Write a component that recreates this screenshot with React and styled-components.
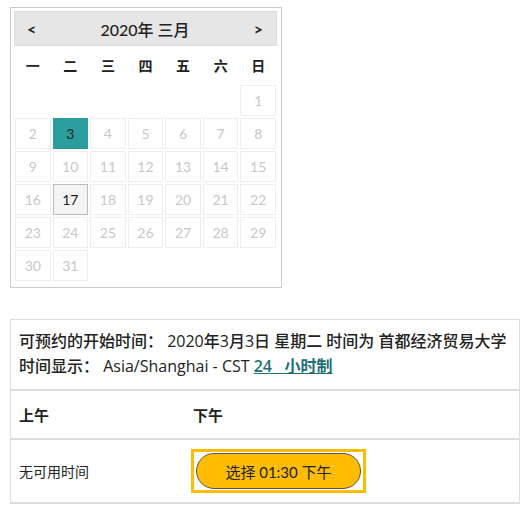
import React from 'react';
import styled, { createGlobalStyle } from 'styled-components';

const GlobalStyle = createGlobalStyle`
  body {
    margin: 0;
    background: #fff;
    font-family: Lato, "Noto Sans CJK SC", sans-serif;
    color: #333;
  }
`;

const Page = styled.div`
  padding: 7px 7px 0 10px;
`;

const Calendar = styled.div`
  width: 272px;
  box-sizing: border-box;
  border: 1px solid #ccc;
  padding: 3px 4px 6px 3px;
`;

const MonthBar = styled.div`
  height: 35px;
  box-sizing: border-box;
  background: #e6e6e6;
  border: 1px solid #ddd;
  display: flex;
  align-items: center;
  justify-content: space-between;
  padding: 0 13px 0 12px;
  font-size: 16px;
  font-weight: 500;
  color: #222;
`;

const Arrow = styled.span`
  font-size: 16px;
  font-weight: 700;
  cursor: pointer;
`;

const WeekRow = styled.div`
  display: grid;
  grid-template-columns: repeat(7, 1fr);
  gap: 2px;
  height: 37px;
  align-items: center;
  margin: 0 1px;
`;

const WeekDay = styled.span`
  text-align: center;
  font-size: 14px;
  font-weight: 700;
  color: #222;
`;

const DayGrid = styled.div`
  display: grid;
  grid-template-columns: repeat(7, 1fr);
  grid-auto-rows: 31px;
  gap: 2px;
  margin: 2px 1px 0;
`;

const Day = styled.div`
  box-sizing: border-box;
  border: 1px solid ${p => (p.$today ? '#bbb' : p.$selected ? '#2a9d9f' : '#eee')};
  background: ${p => (p.$selected ? '#2a9d9f' : p.$today ? '#f4f4f4' : '#fff')};
  color: ${p => (p.$selected || p.$today ? '#222' : '#c8c8c8')};
  display: flex;
  align-items: center;
  justify-content: center;
  font-size: 14px;
  grid-column-start: ${p => p.$start || 'auto'};
`;

const Slots = styled.div`
  margin-top: 31px;
  width: 510px;
  box-sizing: border-box;
  border: 1px solid #ddd;
  border-bottom-width: 2px;
`;

const Info = styled.div`
  padding: 9px 8px 10px 8px;
  border-bottom: 2px solid #ddd;
  font-family: "Open Sans", "Noto Sans CJK SC", sans-serif;
  font-size: 16px;
  font-weight: 500;
  line-height: 25px;
  color: #222;
  white-space: nowrap;
`;

const FormatLink = styled.a`
  color: #1d6f73;
  text-decoration: underline;
  font-weight: 600;
  white-space: pre;
`;

const Row = styled.div`
  display: grid;
  grid-template-columns: 174px 1fr;
  align-items: center;
  height: ${p => p.$h}px;
  padding-left: 8px;
  border-bottom: ${p => (p.$line ? '2px solid #ddd' : 'none')};
  font-size: ${p => (p.$head ? 15 : 14)}px;
  font-weight: ${p => (p.$head ? 700 : 400)};
  color: #222;
`;

const FocusRing = styled.span`
  justify-self: start;
  display: inline-flex;
  border: 3px solid #ffbc00;
  padding: 1px 2px;
  margin-left: -2px;
`;

const SlotButton = styled.button`
  width: 165px;
  height: 36px;
  border-radius: 18px;
  border: 1px solid #555;
  background: #ffbc00;
  color: #222;
  font-family: inherit;
  font-size: 15px;
  cursor: pointer;
`;

const weekdays = ['一', '二', '三', '四', '五', '六', '日'];
const days = Array.from({ length: 31 }, (_, i) => i + 1);

export default function App() {
  return (
    <Page>
      <GlobalStyle />
      <Calendar>
        <MonthBar>
          <Arrow>&lt;</Arrow>
          <span>2020年 三月</span>
          <Arrow>&gt;</Arrow>
        </MonthBar>
        <WeekRow>
          {weekdays.map(w => (
            <WeekDay key={w}>{w}</WeekDay>
          ))}
        </WeekRow>
        <DayGrid>
          {days.map(d => (
            <Day
              key={d}
              $start={d === 1 ? 7 : undefined}
              $selected={d === 3}
              $today={d === 17}
            >
              {d}
            </Day>
          ))}
        </DayGrid>
      </Calendar>

      <Slots>
        <Info>
          可预约的开始时间： 2020年3月3日 星期二 时间为 首都经济贸易大学
          <br />
          时间显示： Asia/Shanghai - CST <FormatLink href="#">24   小时制</FormatLink>
        </Info>
        <Row $h={47} $head $line>
          <span>上午</span>
          <span>下午</span>
        </Row>
        <Row $h={62}>
          <span>无可用时间</span>
          <FocusRing>
            <SlotButton>选择 01:30 下午</SlotButton>
          </FocusRing>
        </Row>
      </Slots>
    </Page>
  );
}
